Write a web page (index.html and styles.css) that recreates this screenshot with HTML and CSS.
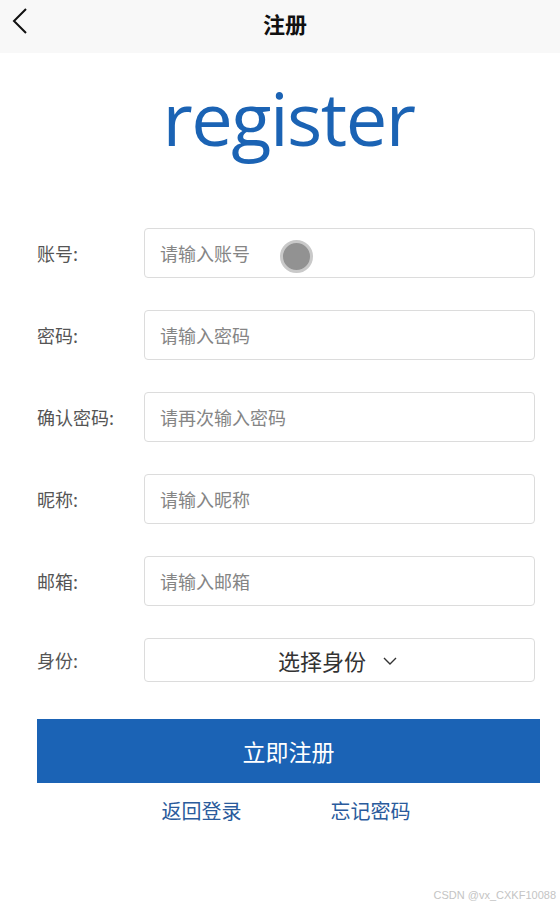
FILE: index.html
```html
<!DOCTYPE html>
<html lang="zh">
<head>
<meta charset="utf-8">
<title>注册</title>
<link rel="stylesheet" href="styles.css">
</head>
<body>
<header class="topbar">
  <span class="back">
    <svg width="16" height="28" viewBox="0 0 16 28"><path d="M14 2 L2 14 L14 26" fill="none" stroke="#111" stroke-width="2"/></svg>
  </span>
  <h1 class="title">注册</h1>
</header>
<main class="page">
  <div class="brand">register</div>
  <form class="form">
    <div class="row">
      <label class="label">账号:</label>
      <div class="field">
        <input class="input" placeholder="请输入账号">
        <span class="touch"></span>
      </div>
    </div>
    <div class="row">
      <label class="label">密码:</label>
      <div class="field"><input class="input" placeholder="请输入密码"></div>
    </div>
    <div class="row">
      <label class="label">确认密码:</label>
      <div class="field"><input class="input" placeholder="请再次输入密码"></div>
    </div>
    <div class="row">
      <label class="label">昵称:</label>
      <div class="field"><input class="input" placeholder="请输入昵称"></div>
    </div>
    <div class="row">
      <label class="label">邮箱:</label>
      <div class="field"><input class="input" placeholder="请输入邮箱"></div>
    </div>
    <div class="row row-select">
      <label class="label">身份:</label>
      <div class="field">
        <div class="select">
          <span>选择身份</span>
          <svg class="caret" width="14" height="9" viewBox="0 0 14 9"><path d="M1 1 L7 7 L13 1" fill="none" stroke="#333" stroke-width="1.4"/></svg>
        </div>
      </div>
    </div>
    <button type="button" class="submit">立即注册</button>
    <div class="links">
      <a class="link">返回登录</a>
      <a class="link">忘记密码</a>
    </div>
  </form>
</main>
<div class="watermark">CSDN @vx_CXKF10088</div>
</body>
</html>
```
FILE: styles.css
```css
* { box-sizing: border-box; }
html, body { margin: 0; padding: 0; }
body {
  width: 560px;
  height: 905px;
  background: #fff;
  font-family: "Noto Sans CJK SC", "Noto Sans", sans-serif;
  position: relative;
  overflow: hidden;
}
.topbar {
  height: 53px;
  background: #f8f8f8;
  display: flex;
  align-items: center;
  justify-content: center;
  position: relative;
}
.back {
  position: absolute;
  left: 12px;
  top: 7px;
  display: block;
}
.back svg { display: block; }
.title {
  margin: 0 0 7px 10px;
  font-size: 22px;
  font-weight: 700;
  color: #111;
  line-height: 1;
}
.page {
  padding: 0 20px 0 37px;
}
.brand {
  text-align: center;
  font-family: "Open Sans", sans-serif;
  font-size: 74px;
  letter-spacing: -1.5px;
  color: #1b63b4;
  line-height: 1;
  margin-top: 28px;
  height: 147px;
}
.form { display: flex; flex-direction: column; }
.row {
  display: flex;
  align-items: center;
  height: 50px;
  margin-bottom: 32px;
}
.row-select { height: 44px; margin-bottom: 37px; }
.label {
  width: 107px;
  font-size: 18px;
  color: #555;
}
.field {
  position: relative;
  width: 391px;
  height: 100%;
}
.input {
  width: 100%;
  height: 100%;
  border: 1px solid #dcdcdc;
  border-radius: 4px;
  padding: 0 15px;
  font-size: 18px;
  font-family: inherit;
  color: #333;
  outline: none;
}
.input::placeholder { color: #858585; }
.touch {
  position: absolute;
  left: 136px;
  top: 12px;
  width: 33px;
  height: 33px;
  border-radius: 50%;
  background: #929292;
  border: 3px solid #c9c9c9;
}
.select {
  height: 100%;
  border: 1px solid #dcdcdc;
  border-radius: 4px;
  display: flex;
  align-items: center;
  justify-content: center;
  gap: 17px;
  font-size: 22px;
  color: #333;
  padding-right: 4px;
}
.caret { display: block; margin-top: 2px; }
.submit {
  width: 503px;
  height: 64px;
  background: #1b63b5;
  border: none;
  color: #fff;
  font-family: inherit;
  font-size: 23px;
  padding: 0;
  cursor: pointer;
}
.links {
  display: flex;
  justify-content: center;
  gap: 89px;
  margin-top: 13px;
  padding-right: 5px;
}
.link {
  font-size: 20px;
  color: #2a5b9c;
  text-decoration: none;
}
.watermark {
  position: absolute;
  right: 4px;
  bottom: 4px;
  font-family: "Liberation Sans", sans-serif;
  font-size: 11px;
  color: #c4c4c4;
}
```
